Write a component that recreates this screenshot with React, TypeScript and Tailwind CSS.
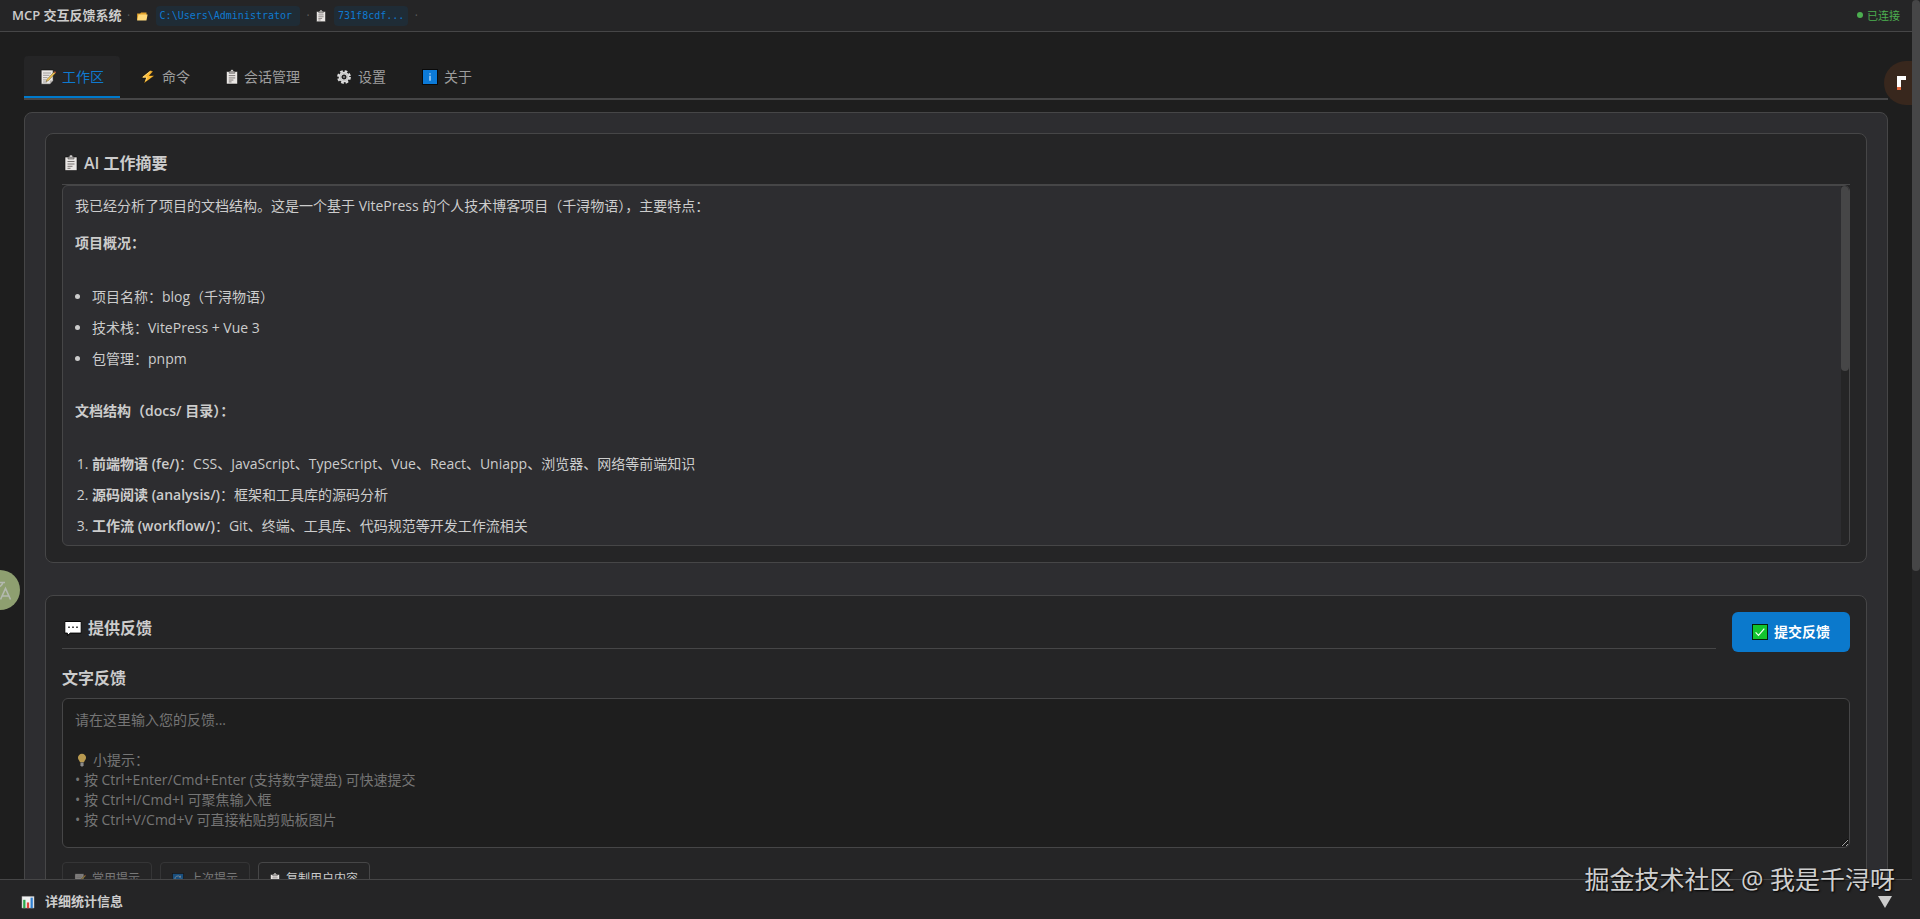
import { ReactNode } from 'react';

type IconProps = {
  className?: string;
};

type TabProps = {
  icon: ReactNode;
  label: string;
  active?: boolean;
};

function ClipboardIcon({ className }: IconProps) {
  return (
    <svg viewBox="1.5 0 13 16" className={className} aria-hidden="true">
      <path d="M2 2h3.2V1.4h1.2a1.6 1.6 0 0 1 3.2 0h1.2V2H14v13.6H2z" fill="#e9e6e4" stroke="#0c0c0c" strokeWidth=".6" />
      <path d="M5 2.2h6v1.8H5z" fill="#b5b1ae" stroke="#3a3a3a" strokeWidth=".5" />
      <path d="M4.5 6.5h7M4.500 9h7M4.500 11.300h5M4.500 13.300h3" stroke="#6a6462" strokeWidth=".9" />
    </svg>
  );
}

function MemoIcon({ className }: IconProps) {
  return (
    <svg viewBox="0 0 16 16" className={className} aria-hidden="true">
      <path d="M1.2 1h12v10.5L9.8 15.2H1.2z" fill="#ece9e6" stroke="#0c0c0c" strokeWidth=".6" />
      <path d="M13.2 11.5H9.8v3.7z" fill="#b5b1ae" />
      <path d="M3 4h8M3 6.3h6.5M3 8.6h4.5M3 10.9h3M3 13h4" stroke="#8d8886" strokeWidth=".8" />
      <path d="M6.8 10.6 14 2.9l1.4 1.3-7.2 7.6-2 .7z" fill="#f0c453" stroke="#3a2f10" strokeWidth=".4" />
      <path d="m14 2.9 1.4 1.3.5-.9-.9-1z" fill="#e8643c" />
    </svg>
  );
}

function FolderIcon({ className }: IconProps) {
  return (
    <svg viewBox="0 0 16 16" className={className} aria-hidden="true">
      <path d="M1.500 13.500V4.500h4l1.300-1.200h7.200V6.500" fill="#e3a32c" />
      <path d="M1.500 14 3.400 6H15.500l-1.600 8z" fill="#ffd97a" />
    </svg>
  );
}

function BoltIcon({ className }: IconProps) {
  return (
    <svg viewBox="0 0 16 16" className={className} aria-hidden="true">
      <path d="M10.300 1.500 1.200 8.800h4.900L3.800 14.600l10.900-8.100H9.400l3.800-4.200z" fill="#fcb82f" stroke="#0c0c0c" strokeWidth=".5" />
      <path d="M10.200 2.400 3 8.100h4L5.600 11.900" fill="none" stroke="#ffdf8a" strokeWidth=".8" />
    </svg>
  );
}

function GearIcon({ className }: IconProps) {
  return (
    <svg viewBox="0 0 16 16" className={className} aria-hidden="true">
      <circle cx="8" cy="8" r="5.900" fill="none" stroke="#dedede" strokeWidth="2" strokeDasharray="2.700 1.934" />
      <circle cx="8" cy="8" r="3.900" fill="#1e1e1e" stroke="#dedede" strokeWidth="2.800" />
      <circle cx="8" cy="8" r="3.800" fill="none" stroke="#a5a5a5" strokeWidth=".5" />
      <circle cx="8" cy="8" r="1" fill="#8a8a8a" />
    </svg>
  );
}

function InfoIcon({ className }: IconProps) {
  return (
    <svg viewBox="0 0 16 16" className={className} aria-hidden="true">
      <rect x=".5" y=".5" width="15" height="15" fill="#0c7ad8" stroke="#0a0a0a" />
      <path d="M8 4.200v1.400M8 6.800v5" stroke="#bfe1ff" strokeWidth="1.300" />
    </svg>
  );
}

function SpeechIcon({ className }: IconProps) {
  return (
    <svg viewBox="0 0 18 16" className={className} aria-hidden="true">
      <path d="M.8 1.500h16.400v11.600H6.300l-2.900 2.500v-2.500H.8z" fill="#fff" stroke="#050505" strokeWidth="1" />
      <path d="M4.200 6.500h1.600v1.600H4.200zM8.200 6.500h1.600v1.600H8.200zM12.200 6.500h1.600v1.600h-1.600z" fill="#222" />
    </svg>
  );
}

function CheckIcon({ className }: IconProps) {
  return (
    <svg viewBox="0 0 16 16" className={className} aria-hidden="true">
      <rect x=".5" y=".5" width="15" height="15" fill="#12c52f" stroke="#04210a" />
      <path d="m3.600 8.400 2.900 2.900 5.800-6.600" fill="none" stroke="#f2fff3" strokeWidth="1.200" />
    </svg>
  );
}

function BulbIcon({ className }: IconProps) {
  return (
    <svg viewBox="0 0 16 16" className={className} aria-hidden="true">
      <path d="M8 .8a4.600 4.600 0 0 0-4.600 4.700c0 2 1.700 3.200 2.300 5h4.600c.6-1.800 2.300-3 2.300-5A4.600 4.600 0 0 0 8 .8z" fill="#b99a50" />
      <path d="M6.200 10.900h3.600v3.200l-1 1.200H7.200l-1-1.200z" fill="#8b8b8b" />
    </svg>
  );
}

function RefreshIcon({ className }: IconProps) {
  return (
    <svg viewBox="0 0 16 16" className={className} aria-hidden="true">
      <rect x=".5" y=".5" width="15" height="15" fill="#0c7ad8" stroke="#0a0a0a" />
      <path d="M3.800 8.500a4.200 4.200 0 0 1 7.500-3M12.200 7.500a4.200 4.200 0 0 1-7.500 3" fill="none" stroke="#cfe6fb" strokeWidth="1.200" />
      <path d="M11.800 3v3H8.900zM4.200 13v-3h2.900z" fill="#cfe6fb" />
    </svg>
  );
}

function ChartIcon({ className }: IconProps) {
  return (
    <svg viewBox="0 0 16 16" className={className} aria-hidden="true">
      <path d="M1 1.500h14v13.500H1z" fill="#f1f1f1" stroke="#777" strokeWidth=".4" />
      <path d="M2.500 5.500h2.600V15H2.500z" fill="#2aa84a" />
      <path d="M6.700 8.500h2.600V15H6.700z" fill="#e0463c" />
      <path d="M10.900 3h2.600v12h-2.600z" fill="#2f7fd0" />
    </svg>
  );
}

function Tab({ icon, label, active }: TabProps) {
  return (
    <button
      type="button"
      role="tab"
      aria-selected={!!active}
      className={
        active
          ? 'flex h-[42px] items-center gap-1.5 rounded-t border-b-2 border-[#007acc] bg-[#252526] px-4 pt-0.5 text-[#0f7ad0]'
          : 'flex h-[42px] items-center gap-1.5 border-b-2 border-transparent px-4 pt-0.5'
      }
    >
      {icon}
      {label}
    </button>
  );
}

const overview = ['项目名称：blog（千浔物语）', '技术栈：VitePress + Vue 3', '包管理：pnpm'];

const docs = [
  { name: '前端物语 (fe/)', text: 'CSS、JavaScript、TypeScript、Vue、React、Uniapp、浏览器、网络等前端知识' },
  { name: '源码阅读 (analysis/)', text: '框架和工具库的源码分析' },
  { name: '工作流 (workflow/)', text: 'Git、终端、工具库、代码规范等开发工作流相关' },
];

const tips = ['按 Ctrl+Enter/Cmd+Enter (支持数字键盘) 可快速提交', '按 Ctrl+I/Cmd+I 可聚焦输入框', '按 Ctrl+V/Cmd+V 可直接粘贴剪贴板图片'];

export default function App() {
  return (
    <div className="relative flex h-screen overflow-hidden bg-[#1e1e1e] font-['Open_Sans','Noto_Sans_CJK_SC',sans-serif] text-sm text-[#cccccc]">
      <div className="flex min-w-0 flex-1 flex-col">
        <header className="flex h-8 shrink-0 items-center justify-between border-b border-[#464647] bg-[#252526] px-3">
          <div className="flex items-center text-xs">
            <h1 className="text-[13px] font-semibold">MCP 交互反馈系统</h1>
            <span className="w-3.5 text-center text-[#5a5a5a]">·</span>
            <FolderIcon className="mr-2 size-3" />
            <code className="rounded bg-[#1f2c36] py-1 pr-2 pl-1 font-['DejaVu_Sans_Mono',monospace] text-[10px] leading-3 text-[#0f7ad0]">
              C:\Users\Administrator
            </code>
            <span className="w-4 text-center text-[#5a5a5a]">·</span>
            <ClipboardIcon className="mr-2 h-3 w-2.5" />
            <code className="rounded bg-[#1f2c36] px-1 py-1 font-['DejaVu_Sans_Mono',monospace] text-[10px] leading-3 text-[#0f7ad0]">
              731f8cdf...
            </code>
            <span className="w-4 text-center text-[#5a5a5a]">·</span>
          </div>
          <div className="flex items-center gap-1 text-[11px] text-[#4caf50]">
            <span className="size-1.5 rounded-full bg-[#4caf50]"></span>
            已连接
          </div>
        </header>

        <main className="min-h-0 flex-1 overflow-hidden px-6 pt-6">
          <div role="tablist" className="mb-3 flex gap-1 border-b-2 border-[#464647] text-[#9d9d9d]">
            <Tab icon={<MemoIcon className="size-4" />} label="工作区" active />
            <Tab icon={<BoltIcon className="size-4" />} label="命令" />
            <Tab icon={<ClipboardIcon className="h-4 w-3" />} label="会话管理" />
            <Tab icon={<GearIcon className="size-4" />} label="设置" />
            <Tab icon={<InfoIcon className="size-4" />} label="关于" />
          </div>

          <div className="rounded-lg border border-[#464647] bg-[#2d2d30] p-5">
            {/* AI summary */}
            <section className="mb-8 rounded-lg border border-[#464647] bg-[#252526] p-4">
              <h2 className="flex h-[35px] items-center gap-1.5 border-b border-[#464647] pb-2 pl-0.5 text-base font-semibold">
                <ClipboardIcon className="h-4 w-3.5" />
                AI 工作摘要
              </h2>
              <div className="flex h-[361px] overflow-hidden rounded-md border border-[#464647] bg-[#2d2d30]">
                <div className="flex-1 px-3 py-2 leading-[23px]">
                  <p className="mb-3.5">
                    我已经分析了项目的文档结构。这是一个基于 VitePress 的个人技术博客项目（千浔物语），主要特点：
                  </p>
                  <p className="mb-[31px] font-semibold">项目概况：</p>
                  <ul className="mb-[29px] list-disc space-y-2 pl-[17px]">
                    {overview.map((item) => (
                      <li key={item}>{item}</li>
                    ))}
                  </ul>
                  <p className="mb-[30px] font-semibold">文档结构（docs/ 目录）：</p>
                  <ol className="list-decimal space-y-2 pl-[17px]">
                    {docs.map((doc) => (
                      <li key={doc.name}>
                        <strong className="font-semibold">{doc.name}</strong>：{doc.text}
                      </li>
                    ))}
                  </ol>
                </div>
                <div className="w-2 bg-[#252526]">
                  <div className="h-[185px] rounded bg-[#464647]"></div>
                </div>
              </div>
            </section>

            {/* Feedback form */}
            <section className="rounded-lg border border-[#464647] bg-[#252526] p-4">
              <div className="flex gap-4">
                <h2 className="flex h-[37px] flex-1 items-center gap-1.5 border-b border-[#464647] pb-1 pl-0.5 text-base font-semibold">
                  <SpeechIcon className="h-4 w-[18px]" />
                  提供反馈
                </h2>
                <button
                  type="button"
                  className="flex h-10 items-center gap-1.5 rounded-md bg-[#0b79cc] px-5 font-semibold text-white"
                >
                  <CheckIcon className="size-4" />
                  提交反馈
                </button>
              </div>
              <label htmlFor="feedback" className="mt-3.5 mb-2 block text-base leading-6 font-semibold">
                文字反馈
              </label>
              <div className="relative">
                <textarea
                  id="feedback"
                  className="block h-[150px] w-full resize-y rounded-md border border-[#464647] bg-[#1e1e1e] p-3"
                />
                <div className="pointer-events-none absolute top-3 left-3 ml-px leading-5 text-[#757575]">
                  <p className="mb-5">请在这里输入您的反馈...</p>
                  <p className="flex items-center gap-1">
                    <BulbIcon className="size-3.5" />
                    小提示：
                  </p>
                  {tips.map((tip) => (
                    <p key={tip}>• {tip}</p>
                  ))}
                </div>
              </div>
              <div className="mt-3.5 flex gap-2 text-xs">
                <button type="button" disabled className="flex h-[34px] items-center gap-1.5 rounded border border-[#464647] px-[11px] opacity-50">
                  <MemoIcon className="size-3" />
                  常用提示
                </button>
                <button type="button" disabled className="flex h-[34px] items-center gap-1.5 rounded border border-[#464647] px-[11px] opacity-50">
                  <RefreshIcon className="size-3" />
                  上次提示
                </button>
                <button type="button" className="flex h-[34px] items-center gap-1.5 rounded border border-[#464647] px-[11px]">
                  <ClipboardIcon className="h-3 w-2.5" />
                  复制用户内容
                </button>
              </div>
            </section>
          </div>
        </main>

        <footer className="flex h-10 shrink-0 items-center justify-between border-t border-[#464647] bg-[#252526] pr-5 pl-[21px]">
          <div className="flex items-center gap-2.5 pt-1 text-[13px] font-semibold">
            <ChartIcon className="size-3.5" />
            详细统计信息
          </div>
          <button type="button" aria-label="展开" className="pt-1">
            <svg viewBox="0 0 14 12" className="h-3 w-3.5">
              <path d="M0 0h14L7 12z" fill="#cccccc" />
            </svg>
          </button>
        </footer>
      </div>

      {/* Page scrollbar */}
      <div className="w-2 bg-[#252526]">
        <div className="h-[571px] rounded bg-[#464647]"></div>
      </div>

      {/* Floating widgets from browser extensions */}
      <div className="absolute top-[570px] left-0 flex h-10 w-5 items-center rounded-r-full bg-[#8e9f70]">
        <svg viewBox="0 0 12 20" className="h-5 w-3" fill="none" stroke="#b4b9b0" strokeWidth="1.600">
          <path d="M0 2.500h5M0 6.500c1.500-1 2.500-2.500 3-4M.500 19.500 5.500 8.500l5 11M2.500 16h6" />
        </svg>
      </div>
      <div className="absolute top-[61px] right-2 flex h-11 w-7 items-center overflow-hidden rounded-l-full bg-[#38271d]">
        <svg viewBox="0 0 10 16" className="ml-3 h-4 w-2.5">
          <path d="M1 1h9v4H5v7H1z" fill="#fff" />
          <path d="M1 12h4v3H1z" fill="#e2683c" />
        </svg>
      </div>
      <div className="pointer-events-none absolute right-[25px] bottom-5 text-[25px] leading-10 text-[#cfcfcf] [text-shadow:1px_1px_2px_#000]">
        掘金技术社区 @ 我是千浔呀
      </div>
    </div>
  );
}
